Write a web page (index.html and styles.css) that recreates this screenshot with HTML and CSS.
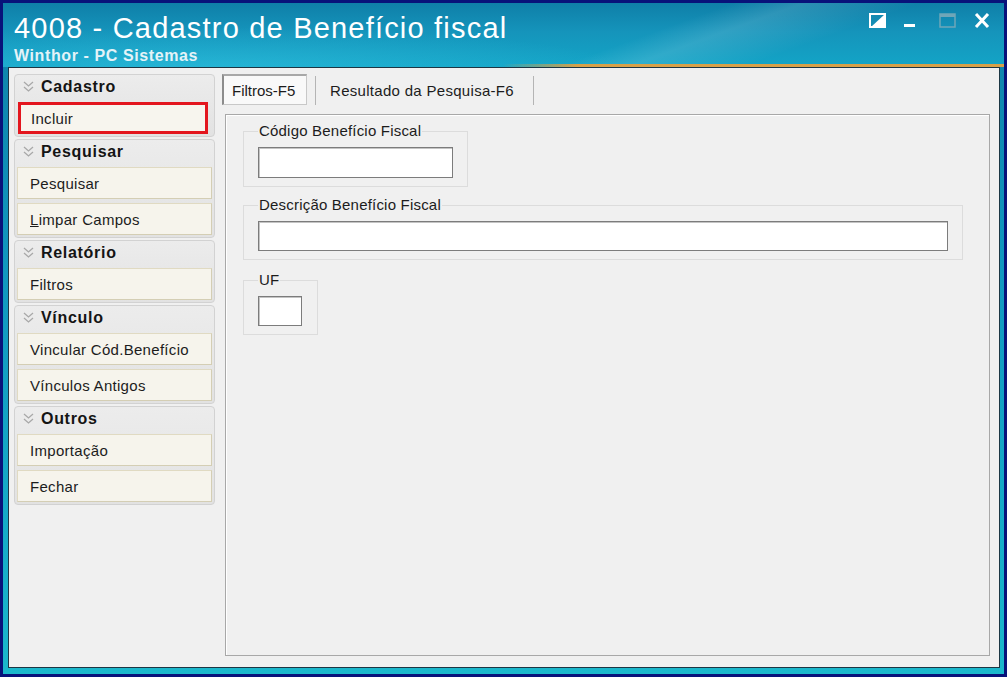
FILE: index.html
```html
<!doctype html>
<html>
	<head>
		<meta charset="utf-8">
		<title>4008 - Cadastro de Benefício fiscal</title>
		<link rel="stylesheet" href="styles.css">
	</head>
	<body>
		<div class="window">
			<div class="titlebar">
				<div class="titles">
					<h1 class="title">4008 - Cadastro de Benefício fiscal</h1>
					<p class="subtitle">Winthor - PC Sistemas</p>
				</div>
				<div class="controls">
					<svg class="ctl-contrast" width="17" height="15" viewBox="0 0 17 15"><rect x="1" y="1" width="15" height="13" fill="none" stroke="#fff" stroke-width="2"/><polygon points="16,1 16,14 2,14" fill="#fff"/></svg>
					<svg class="ctl-min" width="12" height="15" viewBox="0 0 12 15"><rect x="0" y="11" width="11" height="3" fill="#fff"/></svg>
					<svg class="ctl-max" width="17" height="15" viewBox="0 0 17 15"><rect x="1" y="1" width="15" height="13" fill="none" stroke="#6fa6b8" stroke-width="1.5"/><rect x="1" y="1" width="15" height="3" fill="#6fa6b8"/></svg>
					<svg class="ctl-close" width="16" height="15" viewBox="0 0 16 15"><path d="M2 1 L14 14 M14 1 L2 14" stroke="#fff" stroke-width="3"/></svg>
				</div>
				<div class="accent"></div>
			</div>
			<div class="client">
				<div class="sidebar">
					<div class="group">
						<div class="group-head"><svg class="chev" width="11" height="12" viewBox="0 0 11 12"><path d="M1 1 L5.5 5 L10 1 M1 6 L5.5 10 L10 6" fill="none" stroke="#a8a8a8" stroke-width="1.3"/></svg>Cadastro</div>
						<div class="item marked">Incluir</div>
					</div>
					<div class="group">
						<div class="group-head"><svg class="chev" width="11" height="12" viewBox="0 0 11 12"><path d="M1 1 L5.5 5 L10 1 M1 6 L5.5 10 L10 6" fill="none" stroke="#a8a8a8" stroke-width="1.3"/></svg>Pesquisar</div>
						<div class="item">Pesquisar</div>
						<div class="item"><u>L</u>impar Campos</div>
					</div>
					<div class="group">
						<div class="group-head"><svg class="chev" width="11" height="12" viewBox="0 0 11 12"><path d="M1 1 L5.5 5 L10 1 M1 6 L5.5 10 L10 6" fill="none" stroke="#a8a8a8" stroke-width="1.3"/></svg>Relatório</div>
						<div class="item">Filtros</div>
					</div>
					<div class="group">
						<div class="group-head"><svg class="chev" width="11" height="12" viewBox="0 0 11 12"><path d="M1 1 L5.5 5 L10 1 M1 6 L5.5 10 L10 6" fill="none" stroke="#a8a8a8" stroke-width="1.3"/></svg>Vínculo</div>
						<div class="item">Vincular Cód.Benefício</div>
						<div class="item">Vínculos Antigos</div>
					</div>
					<div class="group">
						<div class="group-head"><svg class="chev" width="11" height="12" viewBox="0 0 11 12"><path d="M1 1 L5.5 5 L10 1 M1 6 L5.5 10 L10 6" fill="none" stroke="#a8a8a8" stroke-width="1.3"/></svg>Outros</div>
						<div class="item">Importação</div>
						<div class="item">Fechar</div>
					</div>
				</div>
				<div class="main">
					<div class="tabs">
						<div class="tab active">Filtros-F5</div>
						<div class="tab">Resultado da Pesquisa-F6</div>
					</div>
					<div class="panel">
						<fieldset class="box box-code">
							<legend>Código Benefício Fiscal</legend>
							<div class="field field-code"></div>
						</fieldset>
						<fieldset class="box box-desc">
							<legend>Descrição Benefício Fiscal</legend>
							<div class="field field-desc"></div>
						</fieldset>
						<fieldset class="box box-uf">
							<legend>UF</legend>
							<div class="field field-uf"></div>
						</fieldset>
					</div>
				</div>
			</div>
		</div>
	</body>
</html>
```

FILE: styles.css
```css
*{
	margin:0;
	padding:0;
	box-sizing:border-box;
}
body{
	width:1007px;
	height:677px;
	background:#08127a;
	font-family:"Liberation Sans", Arial, sans-serif;
	overflow:hidden;
}
.window{
	width:1007px;
	height:677px;
	border:3px solid #08127a;
	padding:0 4px 6px 5px;
	display:flex;
	flex-direction:column;
	background:linear-gradient(180deg, #0e80a8 0%, #1198c0 40%, #16adc9 80%, #1bb8cc 100%);
}
.titlebar{
	height:64px;
	display:flex;
	justify-content:space-between;
	position:relative;
	margin:0 -4px 0 -5px;
	padding:0 4px 0 11px;
	background:
		linear-gradient(160deg, rgba(255,255,255,0) 62%, rgba(255,255,255,0.12) 68%, rgba(255,255,255,0) 78%),
		radial-gradient(ellipse 420px 40px at 200px 64px, rgba(60,200,230,0.45), rgba(60,200,230,0)),
		linear-gradient(180deg, #0f7fa8 0%, #1594bb 45%, #13a5c7 100%);
}
.title{
	font-size:29px;
	font-weight:normal;
	color:#fff;
	margin-top:8px;
	line-height:34px;
	letter-spacing:1.2px;
}
.subtitle{
	font-size:16px;
	font-weight:bold;
	color:#e4f3f8;
	line-height:18px;
	margin-top:2px;
	letter-spacing:0.6px;
}
.controls{
	display:flex;
	align-items:flex-start;
	padding-top:10px;
	padding-right:10px;
}
.controls svg{
	display:block;
}
.ctl-min{
	margin-left:18px;
}
.ctl-max{
	margin-left:23px;
}
.ctl-close{
	margin-left:18px;
}
.accent{
	position:absolute;
	left:500px;
	right:0;
	bottom:0;
	height:3px;
	background:linear-gradient(90deg, rgba(220,160,60,0) 0%, #d8a048 15%, #d8a048 100%);
}
.client{
	flex:1;
	display:flex;
	gap:7px;
	background:#f0f0f0;
	border:1px solid #1c3644;
	padding:6px 9px 11px 5px;
	font-size:15px;
	letter-spacing:0.3px;
	color:#1c1c1c;
}
.sidebar{
	width:201px;
	display:flex;
	flex-direction:column;
	gap:2px;
}
.group{
	background:linear-gradient(180deg, #ececec 0%, #e2e2e2 100%);
	border:1px solid #d2d2d2;
	border-radius:4px;
	padding:0 2px 2px 2px;
	display:flex;
	flex-direction:column;
	gap:4px;
}
.group-head{
	height:24px;
	display:flex;
	align-items:center;
	font-size:16px;
	font-weight:bold;
	letter-spacing:0.7px;
	color:#141414;
	padding-left:6px;
	margin-bottom:-1px;
}
.chev{
	margin-right:7px;
}
.item{
	height:32px;
	display:flex;
	align-items:center;
	background:#f6f4ec;
	border:1px solid #e0dac2;
	border-right-color:#d4ceb4;
	border-bottom-color:#d4ceb4;
	padding-left:12px;
}
.item u{
	text-decoration:underline;
}
.item.marked{
	border:3px solid #e3161e;
	margin:0 4px 0 1px;
	padding-left:10px;
	background:#f7f5ee;
}
.main{
	flex:1;
	display:flex;
	flex-direction:column;
}
.tabs{
	display:flex;
	height:31px;
	margin-bottom:9px;
}
.tab{
	display:flex;
	align-items:center;
	padding:0 19px 0 14px;
	margin-top:2px;
	border-left:1px solid #b4b4b4;
	border-right:1px solid #b4b4b4;
}
.tab.active{
	margin-top:0;
	width:85px;
	padding:0 0 0 8px;
	margin-right:8px;
	background:#f9f9f9;
	border:1px solid #c8c8c8;
	border-left:2px solid #8c8c8c;
	border-top:2px solid #a8a8a8;
	letter-spacing:0;
}
.panel{
	flex:1;
	margin-left:3px;
	border:1px solid #a8a8a8;
	box-shadow:inset 1px 1px 0 #ffffff;
	padding:8px 0 0 17px;
	display:flex;
	flex-direction:column;
	align-items:flex-start;
}
.box{
	border:1px solid #dcdcdc;
	padding:8px 14px 8px 14px;
}
.box legend{
	line-height:16px;
	letter-spacing:0.2px;
	padding:0 1px;
}
.box-code{
	width:225px;
}
.box-desc{
	width:720px;
	margin-top:10px;
}
.box-uf{
	width:75px;
	margin-top:12px;
}
.field{
	height:31px;
	background:#fff;
	border:1px solid #7c7c7c;
	box-shadow:inset 1px 1px 0 #c4c4c4;
}
.field-code{
	width:195px;
}
.field-desc{
	width:690px;
	height:30px;
}
.field-uf{
	width:44px;
	height:30px;
}
```
